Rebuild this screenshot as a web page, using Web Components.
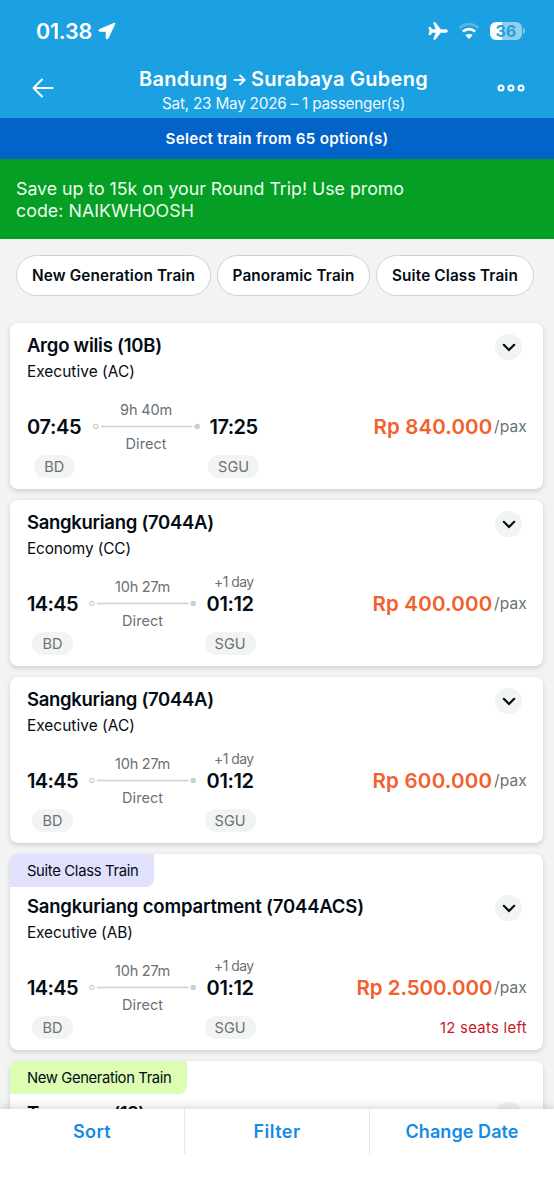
<!DOCTYPE html>
<html lang="en"><head><meta charset="utf-8"><title>Select train</title>
<style>
html,body{margin:0;height:100%;overflow:hidden}
body{font-family:Inter,"Noto Sans",sans-serif;color:#030b14;background:#f2f3f3}
</style></head><body>
<train-app></train-app>
<script>
const define=(name,html,setup)=>{
  const t=document.createElement('template');t.innerHTML=html;
  customElements.define(name,class extends HTMLElement{
    connectedCallback(){
      if(this.shadowRoot)return;
      this.attachShadow({mode:'open'}).append(t.content.cloneNode(true));
      if(setup)setup(this,this.shadowRoot);
    }
  });
};

/* Text run tracked to a given width. */
define('fit-text','<style>:host{display:inline-block;white-space:pre}span{display:inline-block}</style><span><slot></slot></span>',(el,root)=>{
  const w=parseFloat(el.getAttribute('w')),s=root.querySelector('span');
  if(!w)return;
  const n=[...el.textContent].length;
  const m=s.getBoundingClientRect().width;
  if(m)s.style.letterSpacing=((w-m)/n)+'px';
  el.style.width=w+'px';
});

define('status-bar',`<style>
:host{display:flex;height:61px;box-sizing:border-box;padding:0 29px 0 36px;align-items:center;color:#fff}
.time{font-size:21.5px;font-weight:600;line-height:24px}
svg{display:block}.loc{margin-left:6px}.right{margin-left:auto;display:flex;align-items:center}
.bat{margin-left:10px;display:flex;align-items:center}
.cell{width:32.5px;height:18px;border-radius:6px;background:linear-gradient(90deg,#fff 36%,#8fd0f1 36%);color:#259fda;font-size:16px;font-weight:700;line-height:18px;text-align:center}
.nub{width:2px;height:6px;margin-left:1px;border-radius:0 2px 2px 0;background:#79c7ee}
</style>
<fit-text class="time" w="56">01.38</fit-text>
<svg class="loc" width="18" height="18" viewBox="0 0 18 18"><path d="M16.1 1.2 1.4 7.500c-1 .5-.7 1.800.3 1.800l6.400.1.1 6.600c0 1.200 1.400 1.400 1.900.4L16.800 2c.3-.7-.1-1.100-.7-.8z" fill="#fff" stroke="#fff" stroke-width=".8"/></svg>
<div class="right">
<svg width="20" height="18" viewBox="0 0 20 18"><path d="M19.7 9c0-.9-1.3-1.5-2.700-1.500h-4.300L7.600.9C7.400.6 7.200.5 6.900.5h-1c-.3 0-.4.2-.3.500l2.300 6.500H4.200L2.500 5.300c-.2-.2-.3-.3-.6-.3h-.700c-.3 0-.4.200-.4.500L1.600 9l-.8 3.500c0 .3.1.5.4.5h.7c.3 0 .4-.1.6-.3l1.700-2.200h3.700l-2.300 6.500c-.1.3 0 .5.3.5h1c.3 0 .5-.1.7-.4l5.100-6.600H17c1.400 0 2.700-.6 2.700-1.500z" fill="#fff" stroke="#fff" stroke-width=".5"/></svg>
<svg style="margin-left:10px" width="22" height="18" viewBox="0 0 22 18"><g fill="none" stroke="#fff" stroke-width="2.700"><path d="M1.700 6C7 .8 15 .8 20.300 6" opacity=".25"/><path d="M4.900 9.600C8.400 6.200 13.600 6.200 17.100 9.600"/></g><path d="M11 17 7.400 13.300C9.500 11.500 12.500 11.500 14.600 13.300z" fill="#fff"/></svg>
<div class="bat"><div class="cell">36</div><div class="nub"></div></div>
</div>`);

define('nav-bar',`<style>
:host{display:grid;grid-template-columns:107px 289px 1fr;height:57px;padding:0 29px 0 32px;color:#fff}
svg{display:block}.back{margin-top:17px}.more{margin-top:22px;justify-self:end}
.mid{display:flex;flex-direction:column;align-items:center;margin-top:5px}
.t{display:flex;width:289px;justify-content:space-between;font-size:20px;font-weight:600;line-height:26px}
.arrow{font-size:16.500px}
.s{font-size:15.300px;line-height:22px;margin-top:1px;opacity:.93}
</style>
<svg class="back" width="22" height="20" viewBox="0 0 22 20"><path d="M20.500 10H1.500M10 1.500 1.500 10 10 18.500" fill="none" stroke="#fff" stroke-width="2" stroke-linecap="round" stroke-linejoin="round"/></svg>
<div class="mid"><div class="t"><fit-text w="88.500">Bandung</fit-text><span class="arrow">→</span><fit-text w="177">Surabaya Gubeng</fit-text></div><fit-text class="s" w="243">Sat, 23 May 2026 – 1 passenger(s)</fit-text></div>
<svg class="more" width="28" height="10" viewBox="0 0 28 10"><g fill="none" stroke="#fff" stroke-width="2.100"><circle cx="4" cy="5" r="2.500"/><circle cx="14" cy="5" r="2.500"/><circle cx="24" cy="5" r="2.500"/></g></svg>`);

define('filter-chip',`<style>:host{display:flex;height:41px;box-sizing:border-box;border:1.500px solid #d0d1d2;border-radius:21px;background:#fff;align-items:center;justify-content:center;font-size:15.300px;font-weight:600;line-height:20px}</style><slot></slot>`);

define('train-card',`<style>
:host{display:block;height:166.500px;border-radius:8px;background:#fff;box-shadow:0 2px 5px rgba(3,18,26,.16);overflow:hidden}
:host([tag]){height:196.500px}
.tag{display:none;width:max-content;height:33.500px;line-height:34.500px;padding:0 16px 0 16.500px;border-radius:0 0 8px 0;font-size:14.800px;background:var(--tag)}
:host([tag]) .tag{display:block}
.head{display:flex;justify-content:space-between;height:60px;padding:11px 21.500px 0 16.500px;box-sizing:border-box}
:host([tag]) .head{padding-top:7.500px;height:56.500px}
.name{display:block;font-size:18.500px;font-weight:600;line-height:24px;margin-top:-1px}
.cls{display:block;font-size:15.400px;line-height:20px;margin-top:5px}
.btn{width:26.500px;height:26.500px;border-radius:50%;background:#f2f3f3;display:flex;align-items:center;justify-content:center}
.trip{display:flex;align-items:flex-start;padding:11px 16.500px 0 16.500px}
.col{display:flex;flex-direction:column;align-items:center}
.day,.gap{height:22px;line-height:22px;font-size:13.900px;color:#687176}
.day{align-self:flex-end;margin-right:2px}
.time{font-size:20px;font-weight:600;line-height:22px}
.pill{height:22.500px;line-height:23px;border-radius:12px;background:#f2f3f3;color:#687176;font-size:14.500px;margin-top:17.800px;text-align:center}
.bd{width:41px}.sgu{width:51px}
.line{width:107px;margin:7px 8.500px 0 11.200px;color:#687176;font-size:14.500px;line-height:17px}
.line svg{display:block;margin:.5px 0 -.5px}
.price{margin-left:auto;display:flex;flex-direction:column;align-items:flex-end}
.amt{display:flex;align-items:center;line-height:22px;height:22px}
.rp{font-size:20.500px;font-weight:600;color:#f2602b}.pax{font-size:15.500px;color:#687176;margin-left:1.500px}
.left{margin-top:18px;line-height:22px;font-size:14.800px;color:#c6171e}
</style>
<div class="tag"></div>
<div class="head"><div><div class="name"></div><div class="cls"></div></div>
<div class="btn"><svg width="14" height="10" viewBox="0 0 14 10"><path d="M1.800 2.800 7 8l5.200-5.200" fill="none" stroke="#030b14" stroke-width="2.200" stroke-linecap="round"/></svg></div></div>
<div class="trip">
<div class="col"><div class="gap"></div><div class="time dep"></div><div class="pill bd">BD</div></div>
<div class="col line"><div class="dur"></div><svg width="107" height="17" viewBox="0 0 107 17"><circle cx="2.800" cy="8.500" r="2.100" fill="none" stroke="#cdd0d1" stroke-width="1.300"/><path d="M8 8.500h91.500" stroke="#cdd0d1" stroke-width="1.300"/><circle cx="104.200" cy="8.500" r="2.800" fill="#cdd0d1"/></svg><fit-text w="41">Direct</fit-text></div>
<div class="col"><div class="day"></div><div class="time arr"></div><div class="pill sgu">SGU</div></div>
<div class="price"><div class="gap"></div><div class="amt"><span class="rp"></span><fit-text class="pax" w="33">/pax</fit-text></div><div class="left"></div></div>
</div>`,(el,root)=>{
  if(el.hasAttribute('folded'))root.querySelector('.trip').remove();
  const put=(sel,attr)=>{
    const v=el.getAttribute(attr);if(!v)return;
    const [text,w]=v.split('|');
    const f=document.createElement('fit-text');f.textContent=text;
    if(w)f.setAttribute('w',w);
    root.querySelector(sel).append(f);
  };
  for(const [s,a] of [['.tag','tag'],['.name','name'],['.cls','cls'],['.dep','dep'],['.arr','arr'],['.dur','dur'],['.day','day'],['.rp','price'],['.left','left']])put(s,a);
});

define('bottom-bar',`<style>
:host{display:grid;grid-template-columns:184px 185px 1fr;height:90px;background:#fff;box-shadow:0 -2px 8px rgba(3,18,26,.16);position:relative;z-index:1}
div{height:45px;box-sizing:border-box;text-align:center;line-height:45px;font-size:18px;font-weight:600;color:#148be6}
div+div{border-left:1px solid #e6eaed}
</style><div><fit-text w="38">Sort</fit-text></div><div><fit-text w="47">Filter</fit-text></div><div><fit-text w="113">Change Date</fit-text></div>`);

define('train-app',`<style>
:host{display:flex;flex-direction:column;width:554px;height:1199px;overflow:hidden;background:#f2f3f3}
header{background:#1ba0e2;height:118px;flex:none}
.select{background:#0264c8;color:#fff;height:41px;line-height:41px;text-align:center;font-size:15.200px;font-weight:600;flex:none}
.promo{background:#049f24;color:#effced;height:80px;box-sizing:border-box;padding:19px 16px 0;font-size:17.800px;line-height:22px;flex:none}
.promo fit-text{display:block}
.chips{display:flex;gap:6px;padding:16px 16px 0;flex:none}
main{flex:1;min-height:0;padding:26.500px 10.600px 0 10.400px;display:flex;flex-direction:column;gap:10.500px}
train-card{flex:none}bottom-bar{flex:none}
</style>
<header><status-bar></status-bar><nav-bar></nav-bar></header>
<div class="select"><fit-text w="223">Select train from 65 option(s)</fit-text></div>
<div class="promo"><fit-text w="388">Save up to 15k on your Round Trip! Use promo</fit-text><fit-text w="178">code: NAIKWHOOSH</fit-text></div>
<div class="chips"><filter-chip style="width:195px"><fit-text w="163">New Generation Train</fit-text></filter-chip><filter-chip style="width:153px"><fit-text w="122">Panoramic Train</fit-text></filter-chip><filter-chip style="width:158px"><fit-text w="126">Suite Class Train</fit-text></filter-chip></div>
<main>
<train-card name="Argo wilis (10B)|135" cls="Executive (AC)|108" dep="07:45|54.5" dur="9h 40m|52" arr="17:25|48" price="Rp 840.000|119"></train-card>
<train-card name="Sangkuriang (7044A)|187" cls="Economy (CC)|104" dep="14:45|51" dur="10h 27m|55" day="+1 day|39.5" arr="01:12|47" price="Rp 400.000|120"></train-card>
<train-card name="Sangkuriang (7044A)|187" cls="Executive (AC)|108" dep="14:45|51" dur="10h 27m|55" day="+1 day|39.5" arr="01:12|47" price="Rp 600.000|120"></train-card>
<train-card style="--tag:#e1e1fe" tag="Suite Class Train|111.5" name="Sangkuriang compartment (7044ACS)|337" cls="Executive (AB)|106" dep="14:45|51" dur="10h 27m|55" day="+1 day|39.5" arr="01:12|47" price="Rp 2.500.000|136" left="12 seats left|87"></train-card>
<train-card folded style="--tag:#dcfdb2" tag="New Generation Train|144.5" name="Turangga (12)|118"></train-card>
</main>
<bottom-bar></bottom-bar>`);
</script></body></html>
